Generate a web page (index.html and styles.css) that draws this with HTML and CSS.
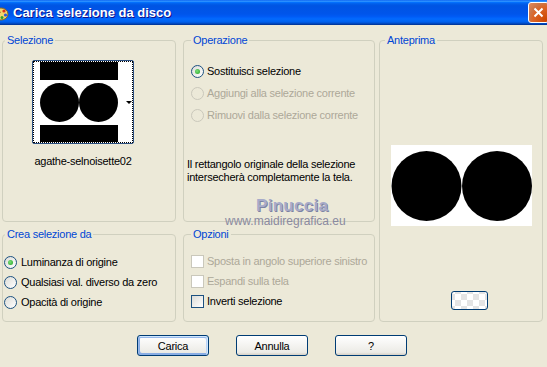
FILE: index.html
```html
<!DOCTYPE html>
<html lang="it">
<head>
    <meta charset="UTF-8">
    <meta name="viewport" content="width=device-width, initial-scale=1.0">
    <title>Carica selezione da disco</title>
    <link rel="stylesheet" href="styles.css">
</head>
<body>
    <div class="window">
        <div class="titlebar">
            <svg class="app-icon" viewBox="0 0 16 16">
                <ellipse cx="8" cy="9" rx="7" ry="6" fill="#f3d36b" stroke="#8a6a20" stroke-width="1"/>
                <circle cx="11" cy="6" r="1.6" fill="#d8301c"/>
                <circle cx="12.5" cy="10" r="1.6" fill="#2a58d8"/>
                <circle cx="9" cy="12.5" r="1.5" fill="#2aa030"/>
                <path d="M2 2 L7 8" stroke="#6b3d12" stroke-width="2"/>
            </svg>
            <span class="title">Carica selezione da disco</span>
            <span class="close-btn">
                <svg viewBox="0 0 11 11" width="11" height="11">
                    <path d="M1.5 1.5 L9.5 9.5 M9.5 1.5 L1.5 9.5" stroke="#fff" stroke-width="2"/>
                </svg>
            </span>
        </div>

        <div class="dialog">
            <div class="groups">
                <fieldset class="group g-sel">
                    <legend>Selezione</legend>
                    <div class="sel-body">
                        <div class="thumb-wrap">
                            <div class="thumb">
                                <div class="thumb-focus">
                                    <svg class="thumb-img" viewBox="0 0 78 80" width="78" height="80">
                                        <rect x="0" y="0" width="78" height="18"/>
                                        <circle cx="19.5" cy="40.5" r="19.5"/>
                                        <circle cx="58.5" cy="40.5" r="19.5"/>
                                        <rect x="0" y="63" width="78" height="17"/>
                                    </svg>
                                    <span class="drop-arrow"></span>
                                </div>
                            </div>
                            <div class="thumb-name">agathe-selnoisette02</div>
                        </div>
                    </div>
                </fieldset>

                <fieldset class="group g-op">
                    <legend>Operazione</legend>
                    <div class="op-body">
                        <div class="opt-row"><span class="radio checked"></span>Sostituisci selezione</div>
                        <div class="opt-row disabled"><span class="radio"></span>Aggiungi alla selezione corrente</div>
                        <div class="opt-row disabled"><span class="radio"></span>Rimuovi dalla selezione corrente</div>
                        <p class="op-note">Il rettangolo originale della selezione<br>intersecherà completamente la tela.</p>
                    </div>
                </fieldset>

                <fieldset class="group g-prev">
                    <legend>Anteprima</legend>
                    <div class="prev-body">
                        <svg class="preview" viewBox="0 0 141 81" width="141" height="81">
                            <rect width="141" height="81" fill="#fff"/>
                            <circle cx="35.5" cy="41" r="35"/>
                            <circle cx="106" cy="41" r="35"/>
                        </svg>
                        <span class="bg-btn"></span>
                    </div>
                </fieldset>

                <fieldset class="group g-crea">
                    <legend>Crea selezione da</legend>
                    <div class="crea-body">
                        <div class="opt-row small"><span class="radio checked"></span>Luminanza di origine</div>
                        <div class="opt-row small"><span class="radio"></span>Qualsiasi val. diverso da zero</div>
                        <div class="opt-row small"><span class="radio"></span>Opacità di origine</div>
                    </div>
                </fieldset>

                <fieldset class="group g-opt">
                    <legend>Opzioni</legend>
                    <div class="opt-body">
                        <div class="opt-row small disabled"><span class="check"></span>Sposta in angolo superiore sinistro</div>
                        <div class="opt-row small disabled"><span class="check"></span>Espandi sulla tela</div>
                        <div class="opt-row small"><span class="check"></span>Inverti selezione</div>
                    </div>
                </fieldset>
            </div>

            <div class="buttons">
                <button class="btn default">Carica</button>
                <button class="btn">Annulla</button>
                <button class="btn">?</button>
            </div>
        </div>

        <div class="watermark">
            <div class="wm-name">Pinuccia</div>
            <div class="wm-site">www.maidiregrafica.eu</div>
        </div>
    </div>
</body>
</html>
```

FILE: styles.css
```css
* {
    box-sizing: border-box;
}
html, body {
    margin: 0;
    padding: 0;
}
body {
    width: 547px;
    height: 367px;
    overflow: hidden;
    background: #ece9d8;
    font-family: "Liberation Sans", Arial, sans-serif;
    font-size: 11px;
    letter-spacing: -0.25px;
    color: #000;
}
.window {
    position: relative;
    height: 100%;
}

/* title bar */
.titlebar {
    height: 25px;
    display: flex;
    align-items: center;
    color: #fff;
    background: linear-gradient(180deg, #0058ee 0%, #3593ff 4%, #288eff 6%, #127dff 8%, #036ffc 10%, #0262ee 14%, #0057e5 20%, #0054e3 24%, #0055eb 56%, #005bf5 66%, #026afe 76%, #0062ef 86%, #0052d6 92%, #0040ab 96%, #003092 100%);
}
.app-icon {
    width: 16px;
    height: 16px;
    margin-left: -7px;
    flex: none;
}
.title {
    flex: 1;
    margin-left: 4px;
    font-size: 13px;
    font-weight: bold;
    letter-spacing: 0;
    text-shadow: 1px 1px #0f1089;
}
.close-btn {
    width: 21px;
    height: 21px;
    margin-right: -2px;
    border: 1px solid #fff;
    border-radius: 3px;
    background: radial-gradient(circle at 90% 90%, #cc4600 0%, #dc6527 55%, #cd7546 70%, #e48a5c 100%);
    display: flex;
    align-items: center;
    justify-content: center;
}

/* group boxes */
.dialog {
    padding-top: 9px;
}
.groups {
    display: grid;
    grid-template-columns: 174px 7px 192px 4px 164px;
    grid-template-rows: 188px 94px;
    row-gap: 6px;
    padding-left: 2px;
}
.group {
    margin: 0;
    padding: 0;
    min-width: 0;
    border: 1px solid #d0d0bf;
    border-radius: 4px;
}
.group legend {
    padding: 0 2px;
    line-height: 13px;
    color: #0046d5;
}
.g-sel {
    grid-column: 1;
    grid-row: 1;
}
.g-sel legend, .g-crea legend {
    margin-left: 2px;
}
.g-op {
    grid-column: 3;
    grid-row: 1;
}
.g-op legend, .g-opt legend {
    margin-left: 7px;
}
.g-prev {
    grid-column: 5;
    grid-row: 1 / 3;
}
.g-prev legend {
    margin-left: 5px;
}
.g-crea {
    grid-column: 1;
    grid-row: 2;
}
.g-opt {
    grid-column: 3;
    grid-row: 2;
}

/* selezione */
.sel-body {
    padding: 13px 0 0 29px;
}
.thumb-wrap {
    display: inline-flex;
    flex-direction: column;
    align-items: center;
}
.thumb {
    width: 102px;
    height: 84px;
    border: 1px solid #2b4f80;
    border-radius: 2px;
    background: #fff;
}
.thumb-focus {
    height: 100%;
    border: 1px dotted #000;
    display: flex;
    align-items: flex-start;
}
.thumb-img {
    margin-left: 6px;
    flex: none;
}
.drop-arrow {
    align-self: center;
    margin-left: auto;
    margin-right: 0;
    width: 0;
    height: 0;
    border-left: 3px solid transparent;
    border-right: 3px solid transparent;
    border-top: 3px solid #000;
}
.thumb-name {
    margin-top: 11px;
    line-height: 13px;
}

/* option rows */
.opt-row {
    display: flex;
    align-items: center;
    height: 22px;
    white-space: nowrap;
}
.opt-row.small {
    height: 20px;
}
.opt-row.disabled {
    color: #aca899;
}
.radio {
    width: 13px;
    height: 13px;
    flex: none;
    margin-right: 3px;
    border: 1px solid #1c5180;
    border-radius: 50%;
    background: linear-gradient(135deg, #dcdcd7, #fff);
    display: flex;
    align-items: center;
    justify-content: center;
}
.radio.checked::after {
    content: "";
    width: 5px;
    height: 5px;
    border-radius: 50%;
    background: radial-gradient(circle at 40% 40%, #7be07a, #21a121);
}
.disabled .radio {
    border-color: #cac8bb;
    background: transparent;
}
.check {
    width: 13px;
    height: 13px;
    flex: none;
    margin-right: 3px;
    border: 1px solid #1c5180;
    background: linear-gradient(135deg, #dcdcd7, #fff);
}
.disabled .check {
    border-color: #cac8bb;
    background: #fff;
}

/* operazione */
.op-body {
    padding: 13px 0 0 3px;
}
.op-body .opt-row {
    padding-left: 4px;
}
.op-note {
    margin: 32px 0 0;
    line-height: 13px;
}

/* anteprima */
.prev-body {
    display: flex;
    flex-direction: column;
    align-items: center;
}
.preview {
    margin-top: 98px;
}
.bg-btn {
    align-self: flex-start;
    margin: 65px 0 0 71px;
    width: 37px;
    height: 19px;
    border: 1px solid #003c74;
    border-radius: 3px;
    background-color: #fff;
    background-image: conic-gradient(#e4e4e4 25%, #fff 25% 50%, #e4e4e4 50% 75%, #fff 75%);
    background-size: 12px 12px;
    background-position: 3px 2px;
}

/* crea selezione / opzioni */
.crea-body {
    padding: 11px 0 0 1px;
}
.crea-body .radio {
    margin-right: 4px;
}
.opt-body {
    padding: 10px 0 0 7px;
}

/* buttons */
.buttons {
    display: flex;
    justify-content: center;
    gap: 27px;
    margin-top: 13px;
    padding-right: 3px;
}
.btn {
    width: 72px;
    height: 21px;
    padding: 0;
    font-family: inherit;
    font-size: 11px;
    letter-spacing: -0.25px;
    color: #000;
    border: 1px solid #003c74;
    border-radius: 3px;
    background: linear-gradient(180deg, #fff, #ecebe6 86%, #d6d0c5);
}
.btn.default {
    box-shadow: inset -1px 1px #cee7ff, inset 1px 2px #98b8ea, inset -2px 2px #bcd4f6, inset 1px -1px #89ade4, inset 2px -2px #89ade4;
}

/* watermark over the dialog */
.watermark {
    position: absolute;
    left: 225px;
    top: 196px;
}
.wm-name {
    padding-left: 31px;
    font-size: 17px;
    font-weight: bold;
    line-height: 20px;
    letter-spacing: 0.3px;
    color: #a7abc9;
    text-shadow: 1px 1px 0 #7c82a3;
}
.wm-site {
    margin-top: -2px;
    font-size: 12px;
    line-height: 14px;
    letter-spacing: 0;
    color: #8a8aa0;
}
```
